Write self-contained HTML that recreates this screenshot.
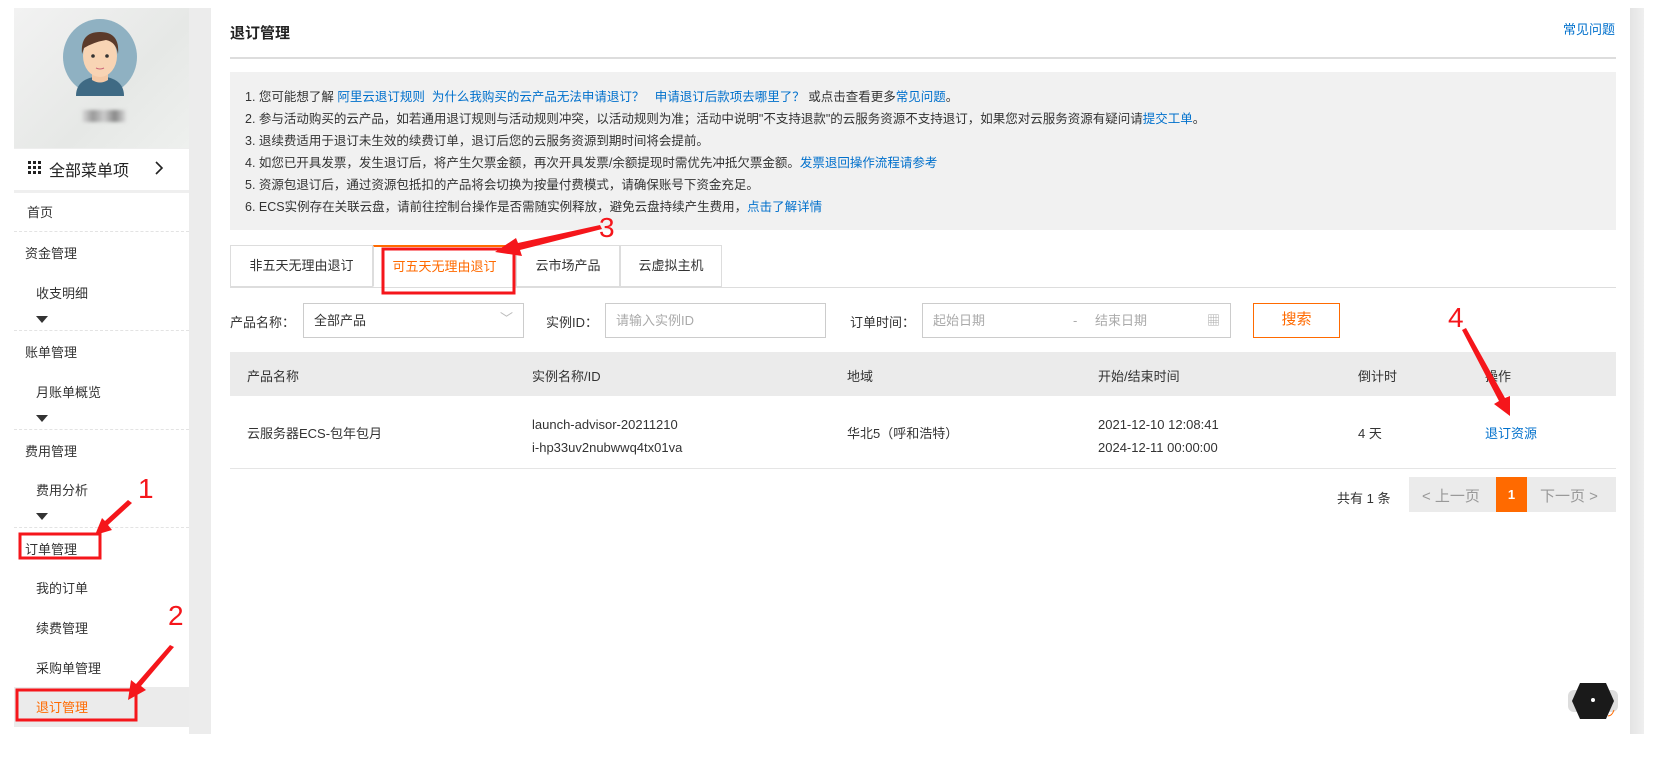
<!DOCTYPE html>
<html><head><meta charset="utf-8"><style>
*{margin:0;padding:0;box-sizing:border-box}
body{width:1656px;height:764px;background:#fff;font-family:"Liberation Sans","Noto Sans CJK SC",sans-serif;color:#333;position:relative;overflow:hidden;font-size:13px}
.a{position:absolute;white-space:nowrap}
.blue{color:#0070cc}
.side{position:absolute;left:14px;top:8px;width:175px;height:726px;background:#fff}
.gut{position:absolute;left:189px;top:8px;width:22px;height:726px;background:#ececec}
.gut2{position:absolute;left:1630px;top:8px;width:14px;height:726px;background:linear-gradient(90deg,#e4e4e4,#efefef)}
.dash{position:absolute;left:14px;width:175px;border-top:1px dashed #e3e3e3}
.tri{position:absolute;width:0;height:0;border-left:6px solid transparent;border-right:6px solid transparent;border-top:7px solid #333}
.tab{position:absolute;top:245px;height:42px;border:1px solid #ddd;background:#fff;font-size:13px;text-align:center;line-height:40px}
.inp{position:absolute;top:303px;height:35px;border:1px solid #ccc;background:#fff;color:#aaa;font-size:13px;line-height:33px;padding-left:10px}
</style></head><body>
<div class="side"></div>
<div style="position:absolute;left:14px;top:8px;width:175px;height:140px;background:linear-gradient(135deg,#f2f2f2,#e6e8e6 60%,#eef0ee)"></div>
<svg class="a" style="left:62px;top:18px" width="76" height="78" viewBox="0 0 76 78">
<ellipse cx="38" cy="39" rx="37" ry="38" fill="#8fb1c2"/>
<path d="M14 78 Q14 60 38 58 Q62 60 62 78Z" fill="#3f6a84"/>
<path d="M30 52 h16 v10 q-8 5 -16 0z" fill="#f4c9a6"/>
<ellipse cx="38" cy="38" rx="17" ry="21" fill="#f8d4b4"/>
<path d="M20 36 Q18 14 38 14 Q58 14 56 36 Q54 24 44 22 Q32 24 22 30Z" fill="#5b3a2a"/>
<circle cx="31" cy="38" r="1.8" fill="#333"/><circle cx="45" cy="38" r="1.8" fill="#333"/>
<path d="M34 50 q4 2 8 0" stroke="#c67" fill="none"/>
</svg>
<div class="a" style="left:82px;top:110px;width:44px;height:12px;background:linear-gradient(90deg,#ddd,#999,#ccc,#888,#ddd);filter:blur(1.5px)"></div>
<div class="a" style="left:14px;top:148px;width:175px;height:1px;background:#eee"></div>
<div class="a" style="left:14px;top:190px;width:175px;height:3px;background:#efefef"></div>
<div class="a" style="left:28px;top:161px;width:13px;height:13px;background:repeating-linear-gradient(90deg,#222 0 3px,transparent 3px 5px);-webkit-mask:repeating-linear-gradient(0deg,#000 0 3px,transparent 3px 5px)"></div>
<div class="a" style="left:49px;top:157px;font-size:16px;color:#222">全部菜单项</div>
<svg class="a" style="left:154px;top:161px" width="10" height="14"><path d="M2 1 L8 7 L2 13" stroke="#222" stroke-width="1.6" fill="none"/></svg>
<div class="a" style="left:27px;top:202px">首页</div>
<div class="dash" style="top:231px"></div>
<div class="a" style="left:25px;top:243px">资金管理</div>
<div class="a" style="left:36px;top:283px">收支明细</div>
<div class="tri" style="left:36px;top:316px"></div>
<div class="dash" style="top:330px"></div>
<div class="a" style="left:25px;top:342px">账单管理</div>
<div class="a" style="left:36px;top:382px">月账单概览</div>
<div class="tri" style="left:36px;top:415px"></div>
<div class="dash" style="top:429px"></div>
<div class="a" style="left:25px;top:441px">费用管理</div>
<div class="a" style="left:36px;top:480px">费用分析</div>
<div class="tri" style="left:36px;top:513px"></div>
<div class="dash" style="top:527px"></div>
<div class="a" style="left:25px;top:539px">订单管理</div>
<div class="a" style="left:36px;top:578px">我的订单</div>
<div class="a" style="left:36px;top:618px">续费管理</div>
<div class="a" style="left:36px;top:658px">采购单管理</div>
<div class="a" style="left:14px;top:687px;width:175px;height:40px;background:#ebebeb"></div>
<div class="a" style="left:36px;top:697px;color:#ff6a00">退订管理</div>
<div class="gut"></div><div class="gut2"></div>

<div class="a" style="left:230px;top:22px;font-size:15px;font-weight:bold;color:#222">退订管理</div>
<div class="a blue" style="left:1563px;top:19px">常见问题</div>
<div class="a" style="left:230px;top:57px;width:1386px;height:2px;background:#ddd"></div>
<div class="a" style="left:230px;top:72px;width:1386px;height:158px;background:#f1f1f1"></div>
<div class="a" style="left:245px;top:86px;font-size:12.5px;line-height:22px">
1. 您可能想了解 <span class="blue">阿里云退订规则</span>&nbsp; <span class="blue">为什么我购买的云产品无法申请退订？</span>&nbsp;&nbsp; <span class="blue">申请退订后款项去哪里了？</span> 或点击查看更多<span class="blue">常见问题</span>。<br>
2. 参与活动购买的云产品，如若通用退订规则与活动规则冲突，以活动规则为准；活动中说明"不支持退款"的云服务资源不支持退订，如果您对云服务资源有疑问请<span class="blue">提交工单</span>。<br>
3. 退续费适用于退订未生效的续费订单，退订后您的云服务资源到期时间将会提前。<br>
4. 如您已开具发票，发生退订后，将产生欠票金额，再次开具发票/余额提现时需优先冲抵欠票金额。<span class="blue">发票退回操作流程请参考</span><br>
5. 资源包退订后，通过资源包抵扣的产品将会切换为按量付费模式，请确保账号下资金充足。<br>
6. ECS实例存在关联云盘，请前往控制台操作是否需随实例释放，避免云盘持续产生费用，<span class="blue">点击了解详情</span></div>

<div class="a" style="left:230px;top:287px;width:1386px;height:1px;background:#ddd"></div>
<div class="tab" style="left:230px;width:143px">非五天无理由退订</div>
<div class="tab" style="left:373px;width:143px;color:#ff6a00;border-top:2px solid #ff6a00;border-bottom-color:#fff">可五天无理由退订</div>
<div class="tab" style="left:516px;width:104px">云市场产品</div>
<div class="tab" style="left:620px;width:102px">云虚拟主机</div>

<div class="a" style="left:230px;top:312px">产品名称：</div>
<div class="inp" style="left:303px;width:221px;color:#333">全部产品<span style="position:absolute;right:10px;top:-2px;color:#bbb">﹀</span></div>
<div class="a" style="left:546px;top:312px">实例ID：</div>
<div class="inp" style="left:605px;width:221px">请输入实例ID</div>
<div class="a" style="left:850px;top:312px">订单时间：</div>
<div class="inp" style="left:922px;width:309px">起始日期<span style="position:absolute;left:150px">-</span><span style="position:absolute;left:172px">结束日期</span><span style="position:absolute;right:10px">▦</span></div>
<div class="a" style="left:1253px;top:303px;width:87px;height:35px;border:1.5px solid #ff6a00;color:#ff6a00;font-size:15px;text-align:center;line-height:32px">搜索</div>

<div class="a" style="left:230px;top:352px;width:1386px;height:44px;background:#ebebeb"></div>
<div class="a" style="left:247px;top:366px">产品名称</div>
<div class="a" style="left:532px;top:366px">实例名称/ID</div>
<div class="a" style="left:847px;top:366px">地域</div>
<div class="a" style="left:1098px;top:366px">开始/结束时间</div>
<div class="a" style="left:1358px;top:366px">倒计时</div>
<div class="a" style="left:1485px;top:366px">操作</div>
<div class="a" style="left:230px;top:468px;width:1386px;height:1px;background:#e5e5e5"></div>
<div class="a" style="left:247px;top:423px">云服务器ECS-包年包月</div>
<div class="a" style="left:532px;top:413px;line-height:23px">launch-advisor-20211210<br>i-hp33uv2nubwwq4tx01va</div>
<div class="a" style="left:847px;top:423px">华北5（呼和浩特）</div>
<div class="a" style="left:1098px;top:413px;line-height:23px">2021-12-10 12:08:41<br>2024-12-11 00:00:00</div>
<div class="a" style="left:1358px;top:423px">4 天</div>
<div class="a blue" style="left:1485px;top:423px">退订资源</div>

<div class="a" style="left:1337px;top:488px">共有 1 条</div>
<div class="a" style="left:1409px;top:477px;width:207px;height:35px;background:#ebebeb"></div>
<div class="a" style="left:1422px;top:485px;color:#999;font-size:15px">&lt; 上一页</div>
<div class="a" style="left:1496px;top:477px;width:31px;height:35px;background:#ff6a00;color:#fff;text-align:center;line-height:35px;font-weight:bold">1</div>
<div class="a" style="left:1540px;top:485px;color:#999;font-size:15px">下一页 &gt;</div>

<svg class="a" style="left:1568px;top:680px" width="50" height="42" viewBox="0 0 50 42">
<rect x="0" y="10" width="50" height="22" rx="6" fill="#ddd"/>
<polygon points="12,3 38,3 46,21 38,39 12,39 4,21" fill="#1a1a1a"/>
<circle cx="25" cy="20" r="2" fill="#fff"/>
<path d="M46 30 q-2 6 -6 6" stroke="#ff6a00" fill="none"/>
</svg>

<svg class="a" style="left:0;top:0" width="1656" height="764">
<g fill="none" stroke="#f5161b" stroke-width="3">
<rect x="20" y="534" width="80" height="24"/>
<rect x="17" y="690" width="119" height="30"/>
<rect x="383" y="249" width="131" height="44"/>
</g>
<g fill="#f5161b">
<polygon points="128,500 132,503 108,525 112,530 95,535 102,518 105,521"/>
<polygon points="170,645 174,647 141,686 146,690 128,700 131,680 136,684"/>
<polygon points="600,225 602,229 520,250 522,256 495,252 516,238 518,243"/>
<polygon points="1462,330 1466,328 1505,398 1510,396 1510,416 1494,404 1499,401"/>
</g>
<g fill="#f5161b" font-family="Liberation Sans,sans-serif" font-size="28">
<text x="138" y="498">1</text>
<text x="168" y="625">2</text>
<text x="599" y="237">3</text>
<text x="1448" y="327">4</text>
</g>
</svg>
</body></html>
